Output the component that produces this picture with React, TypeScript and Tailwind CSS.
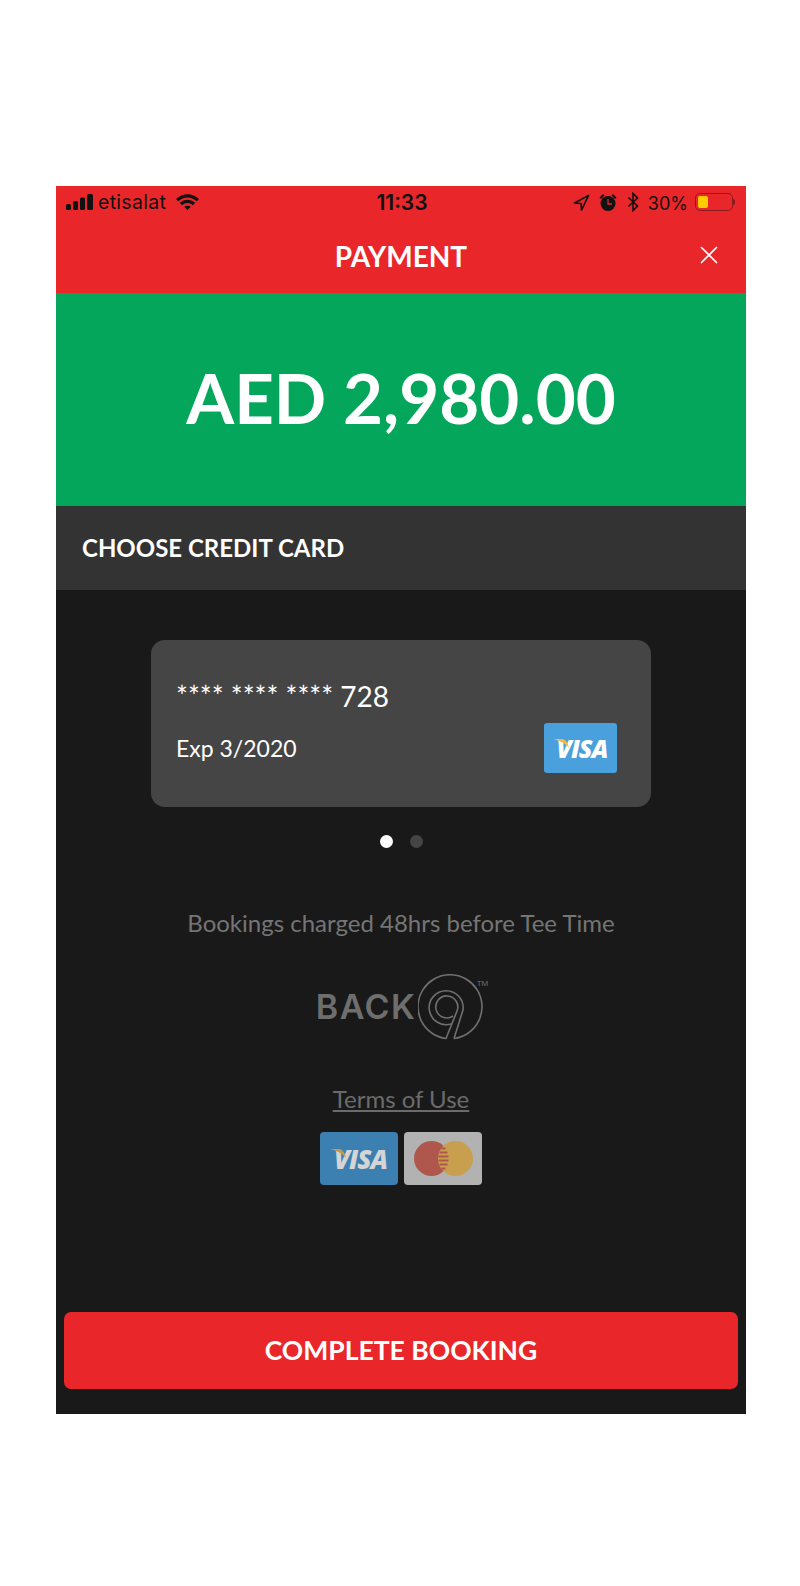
import { X } from 'lucide-react';

function StatusBar() {
  return (
    <div className="h-8 flex items-center justify-between pl-[10px] pr-[11px] text-[#111] font-['Inter',sans-serif]">
      <div className="flex items-center w-[200px]">
        <svg width="27" height="16" viewBox="0 0 27 16" fill="#111">
          <rect x="0" y="10" width="5" height="6" rx="1.5" />
          <rect x="7" y="7" width="5" height="9" rx="1.5" />
          <rect x="14" y="3.500" width="5" height="12.500" rx="1.500" />
          <rect x="21" y="0" width="6" height="16" rx="1.5" />
        </svg>
        <span className="ml-[5px] mt-[2px] text-[19.500px] tracking-[0.3px]">etisalat</span>
        <svg width="25" height="17" viewBox="0 0 26 18" className="ml-[9px]" fill="none" stroke="#111" strokeWidth="3.500">
          <path d="M2 6.5C8.5 0.5 17.5 0.5 24 6.5" />
          <path d="M6 10.5C10 7 16 7 20 10.5" />
          <path d="M13 17L9.5 13.5C11.5 12 14.5 12 16.5 13.5Z" fill="#111" stroke="none" />
        </svg>
      </div>
      <span className="mt-[2px] font-semibold text-[21px] ml-[3px]">11:33</span>
      <div className="flex items-center justify-end w-[200px]">
        <svg width="17" height="17" viewBox="0 0 18 18" fill="none" stroke="#111" strokeWidth="1.7" strokeLinejoin="round">
          <path d="M16.500 1.500L1.500 9.500L8.500 10L9 17Z" />
        </svg>
        <svg width="20" height="21" viewBox="0 0 20 20" className="ml-[8px]" fill="#111">
          <circle cx="10" cy="11" r="7.5" />
          <path d="M1.5 5L5 1.5L6.5 3L3 6.5ZM18.5 5L15 1.5L13.500 3L17 6.5Z" />
          <path d="M10 6.500V11.500H14" stroke="#e9262a" strokeWidth="1.300" fill="none" />
        </svg>
        <svg width="14" height="20" viewBox="0 0 14 22" className="ml-[8px]" fill="none" stroke="#111" strokeWidth="1.700">
          <path d="M2 6L12 15.500L7 20.500V1.500L12 6.500L2 16" />
        </svg>
        <span className="ml-[8px] mt-[2px] text-[18px]">30%</span>
        <div className="ml-[7px] flex items-center">
          <div className="w-[38px] h-[18px] rounded-[5px] border border-[#8c1c1e] p-[2px]">
            <div className="w-[10px] h-full rounded-[2px] bg-[#ffcc00]" />
          </div>
          <div className="w-[2px] h-[6px] rounded-r-sm bg-[#8c1c1e]" />
        </div>
      </div>
    </div>
  );
}

function VisaBadge({ dim }: { dim?: boolean }) {
  return (
    <div
      className={
        dim
          ? 'relative w-[78px] h-[53px] rounded-[4px] bg-[#3c7fb1] flex items-center justify-center'
          : 'relative w-[73px] h-[50px] rounded-[3px] bg-[#4a9fdd] flex items-center justify-center'
      }
    >
      <svg width="16" height="12" viewBox="0 0 16 12" className={dim ? 'absolute left-[10px] top-[17px]' : 'absolute left-[9px] top-[16px]'}>
        <path d="M0 0H10C13 1 15 4 16 9C13 5 8 2 0 0Z" fill={dim ? '#c49a4a' : '#f1b941'} />
      </svg>
      <span
        className={
          dim
            ? "ml-[3px] text-[26px] leading-none font-extrabold italic tracking-[-1px] text-[#d5d5d5] font-['Open_Sans',sans-serif]"
            : "ml-[3px] text-[25px] leading-none font-extrabold italic tracking-[-1px] text-white font-['Open_Sans',sans-serif]"
        }
      >
        VISA
      </span>
    </div>
  );
}

function MastercardBadge() {
  return (
    <div className="w-[78px] h-[53px] rounded-[4px] bg-[#b2b2b2] flex items-center justify-center">
      <svg width="59" height="35" viewBox="0 0 59 35">
        <circle cx="17.500" cy="17.500" r="17.500" fill="#b0574d" />
        <circle cx="41.500" cy="17.500" r="17.500" fill="#c89f4f" />
        <g stroke="#b0574d" strokeWidth="2">
          <path d="M27.500 7.500H31.500M25.500 11.500H33.500M24.500 15.500H34.500M24.500 19.500H34.500M25.500 23.500H33.500M27.500 27.500H31.500" />
        </g>
      </svg>
    </div>
  );
}

function BackNineLogo() {
  return (
    <div className="flex items-start h-[67px] text-[#6e6e6e]">
      <span className="shrink-0 mt-[13px] w-[102px] text-[34px] leading-[40px] font-semibold tracking-[1.500px] font-['Inter',sans-serif]">
        BACK
      </span>
      <svg width="66" height="67" viewBox="0 0 66 67" fill="none" stroke="#707070" strokeWidth="1.600" className="shrink-0">
        <path d="M36 64.500A32 32 0 1 0 28 64.500L39 37A11 11 0 1 0 35 42" />
        <path d="M36 64.500L45 36A17 17 0 1 0 33 50" />
      </svg>
      <span className="-ml-[7px] mt-[6px] text-[8px] leading-none font-['Liberation_Sans',sans-serif]">TM</span>
    </div>
  );
}

export default function App() {
  return (
    <div className="min-h-[1586px] bg-white pt-[186px] font-['Lato',sans-serif]">
      <div className="mx-[56px] w-[690px] h-[1228px] bg-[#191919] flex flex-col">
        <header className="h-[107px] bg-[#e9262a] flex flex-col">
          <StatusBar />
          <div className="relative flex-1 flex items-center justify-center">
            <h1 className="text-white text-[28px] font-bold">PAYMENT</h1>
            <button className="absolute right-[22px] top-[22px] text-white">
              <X size={30} strokeWidth={1.4} />
            </button>
          </div>
        </header>

        <div className="h-[213px] bg-[#03a65a] flex items-center justify-center pb-[4px]">
          <span className="text-white text-[69px] font-bold leading-none">AED 2,980.00</span>
        </div>

        <div className="h-[84px] bg-[#333333] flex items-center pl-[26px]">
          <h2 className="text-white text-[24px] font-bold">CHOOSE CREDIT CARD</h2>
        </div>

        <main className="flex-1 flex flex-col items-center">
          <div className="mt-[50px] w-[500px] h-[167px] rounded-[14px] bg-[#454545] pl-[25px] pr-[34px] flex flex-col">
            <p className="mt-[38px] text-white text-[28px] leading-[36px]">**** **** **** 728</p>
            <div className="flex items-start justify-between">
              <p className="mt-[16px] text-white text-[23px] leading-[36px]">Exp 3/2020</p>
              <div className="mt-[9px]">
                <VisaBadge />
              </div>
            </div>
          </div>

          <div className="mt-[28px] flex gap-[17px]">
            <div className="w-[13px] h-[13px] rounded-full bg-white" />
            <div className="w-[13px] h-[13px] rounded-full bg-[#454545]" />
          </div>

          <p className="mt-[59px] text-[#757575] text-[24px] leading-[32px]">Bookings charged 48hrs before Tee Time</p>

          <div className="mt-[35px] ml-[2px]">
            <BackNineLogo />
          </div>

          <a className="mt-[42px] text-[#6b6b6b] text-[24px] leading-[32px] underline">Terms of Use</a>

          <div className="mt-[17px] flex gap-[6px]">
            <VisaBadge dim />
            <MastercardBadge />
          </div>

          <button className="mt-auto mb-[25px] w-[674px] h-[77px] rounded-[7px] bg-[#e9262a] text-white text-[26.500px] font-bold">
            COMPLETE BOOKING
          </button>
        </main>
      </div>
    </div>
  );
}
